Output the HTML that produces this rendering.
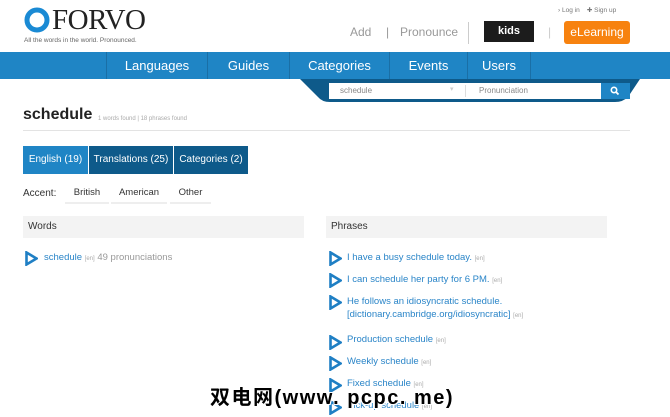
<!DOCTYPE html>
<html><head><meta charset="utf-8"><style>
*{margin:0;padding:0;box-sizing:border-box}
body{width:670px;height:417px;overflow:hidden;background:#fff;font-family:"Liberation Sans",sans-serif;position:relative;color:#333}
.a{position:absolute;white-space:nowrap}
.nav{position:absolute;left:0;top:52px;width:670px;height:27px;background:#1f85c5}
.nav div{position:absolute;top:0;height:27px;line-height:27px;color:#fff;font-size:13px;text-align:center;border-left:1px solid #1a6fa6}
.tab{position:absolute;top:146px;height:28px;line-height:28px;color:#fff;font-size:10px;text-align:center}
.acc{position:absolute;top:184px;height:20px;line-height:18px;font-size:9.5px;color:#333;text-align:center;border-bottom:2px solid #eee}
.ic{position:absolute;width:13px;height:15px}
.l{position:absolute;font-size:9.5px;color:#2a85c8;white-space:nowrap}
.l i{font-style:normal;font-size:6px;color:#aaa}
</style></head><body>
<svg class="a" style="left:24px;top:7px" width="26" height="26"><circle cx="13" cy="13" r="10" fill="none" stroke="#1a8ad4" stroke-width="5"/></svg>
<div class="a" style="left:52px;top:4px;font-family:'Liberation Serif',serif;font-size:29px;color:#222;letter-spacing:-0.5px">FORVO</div>
<div class="a" style="left:24px;top:37px;font-size:6.5px;color:#666">All the words in the world. Pronounced.</div>
<div class="a" style="left:558px;top:6px;font-size:6.5px;color:#777">› Log in &nbsp;&nbsp;&nbsp;✚ Sign up</div>
<div class="a" style="left:350px;top:25px;font-size:12px;color:#999">Add</div>
<div class="a" style="left:386px;top:25px;font-size:12px;color:#999">|</div>
<div class="a" style="left:400px;top:25px;font-size:12px;color:#999">Pronounce</div>
<div class="a" style="left:468px;top:22px;width:1px;height:22px;background:#ccc"></div>
<div class="a" style="left:484px;top:21px;width:50px;height:21px;background:#1c1c1c;color:#fff;font-size:11px;font-weight:bold;text-align:center;line-height:20px">kids</div>
<div class="a" style="left:548px;top:25px;font-size:12px;color:#ccc">|</div>
<div class="a" style="left:564px;top:21px;width:66px;height:23px;background:#f7820f;border-radius:3px;color:#fff;font-size:12px;text-align:center;line-height:23px">eLearning</div>
<div class="nav">
<div style="left:106px;width:101px">Languages</div>
<div style="left:207px;width:82px">Guides</div>
<div style="left:289px;width:100px">Categories</div>
<div style="left:389px;width:78px">Events</div>
<div style="left:467px;width:63px">Users</div>
<div style="left:530px;width:1px"></div>
</div>
<svg class="a" style="left:300px;top:79px" width="340" height="24"><path d="M0 0 H340 L328 18 Q323 23 315 23 H30 Q22 23 18 18 Z" fill="#0e5a8a"/></svg>
<div class="a" style="left:329px;top:83px;width:276px;height:16px;background:#fff"></div>
<div class="a" style="left:340px;top:86px;font-size:8px;color:#888">schedule</div>
<div class="a" style="left:450px;top:85px;font-size:7px;color:#ccc">▾</div>
<div class="a" style="left:465px;top:85px;width:1px;height:12px;background:#ddd"></div>
<div class="a" style="left:479px;top:86px;font-size:8px;color:#888">Pronunciation</div>
<div class="a" style="left:601px;top:83px;width:29px;height:16px;background:#1f85c5"></div>
<svg class="a" style="left:610px;top:86px" width="10" height="10"><circle cx="4" cy="4" r="2.7" fill="none" stroke="#fff" stroke-width="1.6"/><path d="M6 6 L8.5 8.5" stroke="#fff" stroke-width="1.8"/></svg>
<div class="a" style="left:23px;top:106px;font-size:16px;font-weight:bold;color:#222">schedule</div>
<div class="a" style="left:98px;top:116px;font-size:6px;color:#aaa">1 words found | 18 phrases found</div>
<div class="a" style="left:23px;top:130px;width:607px;height:1px;background:#e3e3e3"></div>
<div class="tab" style="left:23px;width:65px;background:#1f85c5">English (19)</div>
<div class="tab" style="left:89px;width:84px;background:#0e5a8a">Translations (25)</div>
<div class="tab" style="left:174px;width:74px;background:#0e5a8a">Categories (2)</div>
<div class="a" style="left:23px;top:188px;font-size:10px;color:#333">Accent:</div>
<div class="acc" style="left:65px;width:44px">British</div>
<div class="acc" style="left:111px;width:56px">American</div>
<div class="acc" style="left:170px;width:41px">Other</div>
<div class="a" style="left:23px;top:216px;width:281px;height:22px;background:#f3f3f3;font-size:10px;line-height:22px;padding-left:5px">Words</div>
<div class="a" style="left:326px;top:216px;width:281px;height:22px;background:#f3f3f3;font-size:10px;line-height:22px;padding-left:5px">Phrases</div>
<svg width="0" height="0" style="position:absolute"><defs><symbol id="p" viewBox="0 0 13 15"><path d="M1.5 1.5 L11.5 7.5 L1.5 13.5 Z" fill="none" stroke="#1f7fc4" stroke-width="2.6" stroke-linejoin="miter"/></symbol></defs></svg>
<svg class="ic" style="left:25px;top:251px"><use href="#p"/></svg>
<div class="l" style="left:44px;top:252px">schedule <i>[en]</i> <span style="color:#999">49 pronunciations</span></div>
<svg class="ic" style="left:329px;top:251px"><use href="#p"/></svg>
<div class="l" style="left:347px;top:252px">I have a busy schedule today. <i>[en]</i></div>
<svg class="ic" style="left:329px;top:273px"><use href="#p"/></svg>
<div class="l" style="left:347px;top:274px">I can schedule her party for 6 PM. <i>[en]</i></div>
<svg class="ic" style="left:329px;top:295px"><use href="#p"/></svg>
<div class="l" style="left:347px;top:296px">He follows an idiosyncratic schedule.</div>
<div class="l" style="left:347px;top:309px">[dictionary.cambridge.org/idiosyncratic] <i>[en]</i></div>
<svg class="ic" style="left:329px;top:335px"><use href="#p"/></svg>
<div class="l" style="left:347px;top:334px">Production schedule <i>[en]</i></div>
<svg class="ic" style="left:329px;top:356px"><use href="#p"/></svg>
<div class="l" style="left:347px;top:356px">Weekly schedule <i>[en]</i></div>
<svg class="ic" style="left:329px;top:378px"><use href="#p"/></svg>
<div class="l" style="left:347px;top:378px">Fixed schedule <i>[en]</i></div>
<svg class="ic" style="left:329px;top:400px"><use href="#p"/></svg>
<div class="l" style="left:347px;top:400px">Pick-up schedule <i>[en]</i></div>
<div class="a" style="left:210px;top:381px;font-size:20px;font-weight:bold;letter-spacing:1.5px;color:#000;font-family:'Liberation Sans','Noto Sans CJK SC',sans-serif;text-shadow:1px 1px 0 #fff,-1px -1px 0 #fff,1px -1px 0 #fff,-1px 1px 0 #fff">双电网(www. pcpc. me)</div>
</body></html>
